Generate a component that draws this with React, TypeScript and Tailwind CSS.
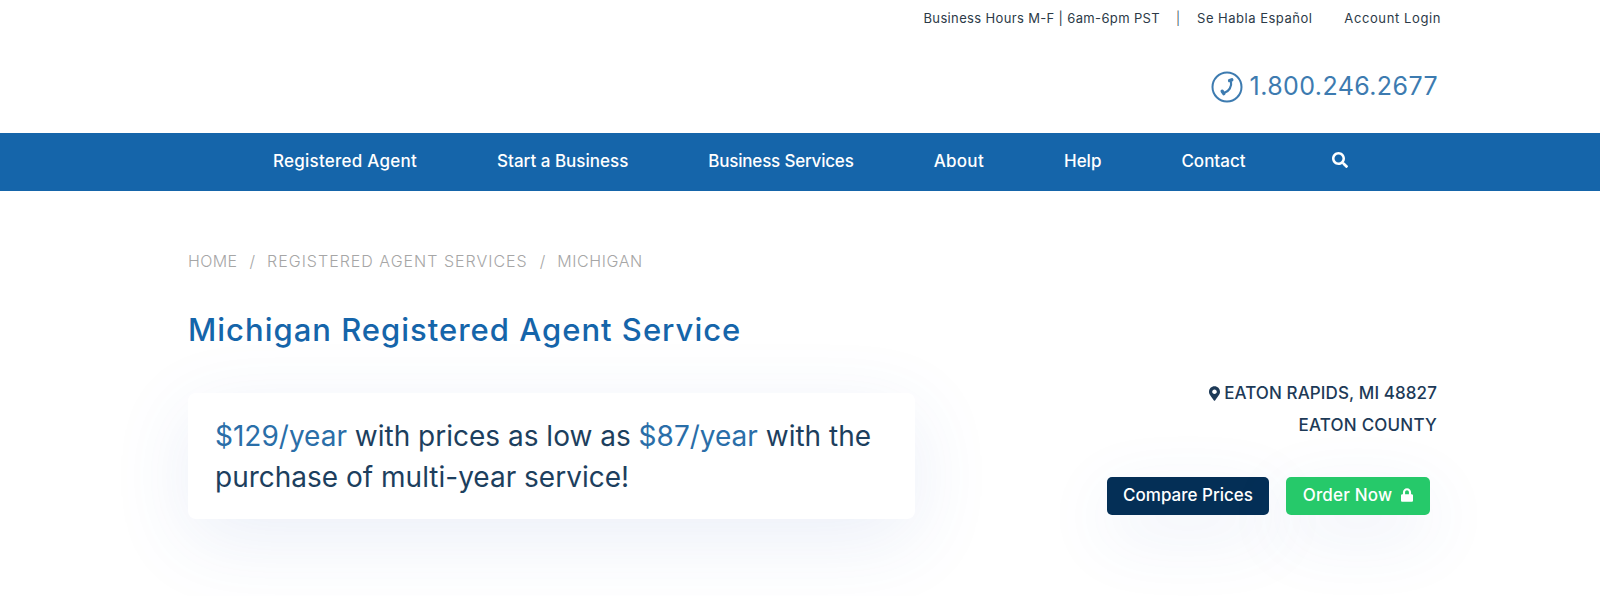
import { FaLock, FaMapMarkerAlt, FaSearch } from 'react-icons/fa';

const navItems = [
    { label: 'Registered Agent', className: 'tracking-[0.25px]' },
    { label: 'Start a Business', className: '' },
    { label: 'Business Services', className: 'tracking-[-0.2px]' },
    { label: 'About', className: 'tracking-[0.3px]' },
    { label: 'Help', className: '' },
    { label: 'Contact', className: '' },
];

function PhoneIcon() {
    return (
        <svg viewBox="0 0 32 32" className="h-[32px] w-[32px]" fill="none" stroke="#3d7bb0">
            <circle cx="16" cy="16" r="14.5" strokeWidth="2" />
            <path d="M20 10.5C21 15.5 18 20.5 13 22" strokeWidth="2.2" />
            <path d="M18.6 9.6l2.2-.8M11.2 20.2l1.6 2.4" strokeWidth="3.4" strokeLinecap="round" />
        </svg>
    );
}

export default function App() {
    return (
        <div className="h-[596px] overflow-hidden bg-white font-['Inter','Liberation_Sans',sans-serif]">
            <div className="flex h-[37px] items-center justify-end pr-[159px] text-[13px] text-[#2c3a47]">
                <span className="tracking-[0.35px]">Business Hours M-F | 6am-6pm PST</span>
                <span className="ml-[16px] font-light">|</span>
                <span className="ml-[17px] tracking-[0.5px]">Se Habla Español</span>
                <span className="ml-[32px] tracking-[0.6px]">Account Login</span>
            </div>
            <div className="flex h-[96px] items-center justify-end gap-[7px] pr-[162px] pt-[4px]">
                <PhoneIcon />
                <span className="text-[25px] tracking-[0.4px] text-[#3d7bb0]">1.800.246.2677</span>
            </div>
            <nav className="flex h-[58px] items-center gap-[80px] bg-[#1565aa] pl-[273px] text-[17px] font-medium text-white">
                {navItems.map((item) => (
                    <a key={item.label} className={item.className}>
                        {item.label}
                    </a>
                ))}
                <FaSearch className="mb-[4px] ml-[6px] h-[16px] w-[16px]" />
            </nav>
            <main className="flex flex-col pt-[58px] pl-[188px] pr-[160px]">
                <div className="flex gap-[12px] text-[16px] font-light text-[#a6a6a6]">
                    <span className="tracking-[0.4px]">HOME</span>
                    <span>/</span>
                    <span className="tracking-[1px]">REGISTERED AGENT SERVICES</span>
                    <span>/</span>
                    <span className="tracking-[0.6px]">MICHIGAN</span>
                </div>
                <h1 className="mt-[34px] text-[31px] font-medium leading-[46px] tracking-[1px] text-[#1565aa]">
                    Michigan Registered Agent Service
                </h1>
                <div className="mt-[40px] flex items-start justify-between">
                    <div className="h-[126px] w-[727px] rounded-[8px] bg-white px-[27px] pt-[23px] text-[28px] leading-[41px] text-[#1d3f5e] shadow-[0_20px_80px_rgba(60,100,190,0.1)]">
                        <span className="text-[#2a6ea8]">$129/year</span> with prices as low as{' '}
                        <span className="text-[#2a6ea8]">$87/year</span> with the purchase of multi-year service!
                    </div>
                    <div className="-mt-[16px] flex flex-col items-end pr-[3px]">
                        <div className="flex items-center gap-[4px] text-[17px] font-medium leading-[32px] tracking-[0.1px] text-[#1d3a57]">
                            <FaMapMarkerAlt className="h-[15px] w-[11px]" />
                            EATON RAPIDS, MI 48827
                        </div>
                        <div className="text-[17px] font-medium leading-[32px] tracking-[0.2px] text-[#1d3a57]">EATON COUNTY</div>
                        <div className="mt-[36px] mr-[7px] flex gap-[17px] text-[17px] font-medium">
                            <a className="flex h-[38px] w-[162px] items-center justify-center rounded-[5px] bg-[#042f56] text-white shadow-[0_20px_70px_rgba(60,100,190,0.1)]">
                                Compare Prices
                            </a>
                            <a className="flex h-[38px] w-[144px] items-center justify-center gap-[9px] rounded-[5px] bg-[#26c96a] text-white shadow-[0_20px_70px_rgba(60,100,190,0.1)]">
                                <span className="tracking-[0.2px]">Order Now</span>
                                <FaLock className="mb-[3px] h-[14px] w-[12px]" />
                            </a>
                        </div>
                    </div>
                </div>
            </main>
        </div>
    );
}
